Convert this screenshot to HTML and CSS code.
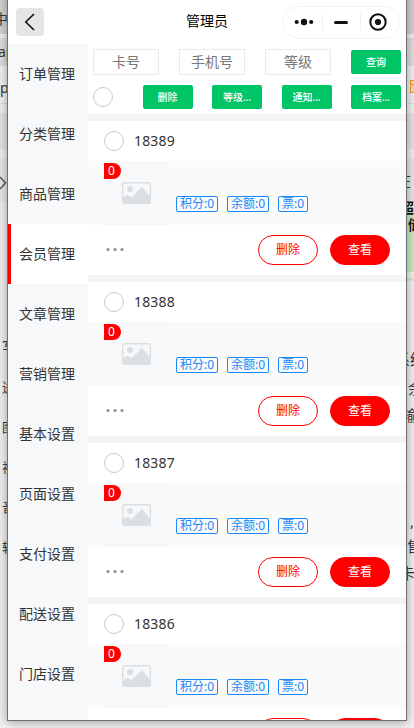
FILE: index.html
```html
<!DOCTYPE html>
<html lang="zh-CN">
<head>
<meta charset="utf-8">
<title>管理员</title>
<link rel="stylesheet" href="styles.css">
</head>
<body>
<div class="desktop" id="desktop"></div>
<div class="window">
  <header class="nav">
    <button class="back" aria-label="返回"><svg width="28" height="28" viewBox="0 0 28 28"><path d="M18 6 9.800 14 18 22" fill="none" stroke="#111" stroke-width="1.600"/></svg></button>
    <h1>管理员</h1>
    <div class="capsule">
      <svg width="118" height="33" viewBox="0 0 118 33"><rect x=".5" y=".5" width="117" height="32" rx="16" fill="#fff" stroke="#f3f3f3"/><path d="M40.500 7v18M78.500 7v18" stroke="#f1f1f1"/><circle cx="14.700" cy="16" r="2.100"/><circle cx="22" cy="16" r="3.200"/><circle cx="29.200" cy="16" r="2.100"/><path d="M53.500 16.500h11" stroke="#111" stroke-width="3" stroke-linecap="round"/><circle cx="96" cy="16" r="7.700" fill="none" stroke="#111" stroke-width="2"/><circle cx="96" cy="16" r="3.100"/></svg>
    </div>
  </header>
  <div class="main">
    <nav class="side">
      <a>订单管理</a><a>分类管理</a><a>商品管理</a><a class="active">会员管理</a><a>文章管理</a><a>营销管理</a><a>基本设置</a><a>页面设置</a><a>支付设置</a><a>配送设置</a><a>门店设置</a>
    </nav>
    <section class="content">
      <div class="tools">
        <div class="row"><span class="field">卡号</span><span class="field">手机号</span><span class="field">等级</span><button class="green">查询</button></div>
        <div class="row actions"><i class="radio"></i><button class="green">删除</button><button class="green">等级...</button><button class="green">通知...</button><button class="green">档案...</button></div>
      </div>
      <div id="cards"></div>
    </section>
  </div>
</div>
<template id="card">
  <article class="card">
    <div class="head"><i class="radio"></i><span class="number"></span></div>
    <div class="body">
      <div class="thumb"><span class="badge">0</span><svg width="29" height="22" viewBox="0 0 29 22"><rect x=".7" y=".7" width="27.600" height="20.600" rx="1.500" fill="#f7f8fa" stroke="#dcdfe2" stroke-width="1.400"/><circle cx="8" cy="7" r="3" fill="#dcdfe2"/><path d="M1 15.500q4.500-5 8.500 0L20 4.800l8 9.700V21H1z" fill="#dcdfe2"/></svg></div>
      <div class="tags"><span>积分:0</span><span>余额:0</span><span>票:0</span></div>
    </div>
    <div class="foot"><svg class="more" width="20" height="6" viewBox="0 0 20 6"><circle cx="4" cy="2.500" r="1.600"/><circle cx="11" cy="2.500" r="1.600"/><circle cx="18" cy="2.500" r="1.600"/></svg><button class="pill">删除</button><button class="pill solid">查看</button></div>
  </article>
</template>
<script src="app.js"></script>
</body>
</html>
```
FILE: styles.css
```css
* { box-sizing: border-box; }
body { margin: 0; width: 414px; height: 728px; overflow: hidden; font-family: "Noto Sans", "Noto Sans CJK SC", sans-serif; color: #333; }
button { margin: 0; padding: 0; border: 0; font-family: inherit; }
.desktop { position: absolute; inset: 0; overflow: hidden; background: linear-gradient(#d2d2d2 0 34px, #f0f0f0 34px 38px, #dedede 38px 66px, #f1f1f1 66px 103px, #dcdcdc 103px 104px, #f1f1f1 104px 113px, #e4e4e4 113px 149px, #f1f1f1 149px 158px, #e8e8e8 158px 202px, #f1f1f1 202px); }
.desktop span { position: absolute; white-space: nowrap; line-height: 20px; color: #333; }
.desktop .bold { font-weight: 700; color: #111; }
.desktop svg { position: absolute; left: 0; top: 0; }
.window { position: relative; margin-left: 7px; width: 400px; height: 721px; overflow: hidden; border: solid #707070; border-width: 0 1px 1px; background: #fff; }
.shade { position: absolute; left: 7px; top: -10px; width: 400px; height: 731px; box-shadow: 0 1px 10px rgba(0, 0, 0, .36); }
.nav { position: relative; height: 44px; display: flex; align-items: center; justify-content: center; }
.back { position: absolute; left: 8px; top: 8px; width: 28px; height: 28px; border-radius: 4px; background: #e5e5e5; }
.back svg { display: block; }
h1 { margin: 0 0 2px; font-size: 14px; line-height: 20px; font-weight: 400; color: #000; }
.capsule { position: absolute; left: 274px; top: 6px; height: 33px; }
.capsule svg { display: block; fill: #111; }
.main { display: flex; height: 676px; }
.side { width: 80px; flex: none; background: #f7f8fa; }
.side a { display: flex; align-items: center; height: 60px; padding-left: 11px; font-size: 14px; line-height: 20px; }
.side .active { background: #fff; border-left: 3px solid #f00; padding-left: 8px; }
.content { width: 318px; background: #f4f4f4; }
.tools { height: 70px; padding: 5px; background: #fff; }
.row { display: flex; align-items: center; justify-content: space-between; height: 26px; }
.actions { margin-top: 10px; height: 24px; }
.actions .radio { margin-right: 10px; }
.field { width: 66px; height: 26px; border: 1px solid #eaeaea; text-align: center; font-size: 14px; line-height: 24px; color: #777; }
.green { width: 50px; height: 24px; border-radius: 2px; background: #00c567; color: #fff; font-size: 10px; line-height: 24px; font-weight: 500; }
.radio { width: 20px; height: 20px; flex: none; border: 1px solid #c8c9cc; border-radius: 50%; }
.card { margin-top: 7px; height: 154px; background: #fff; }
.head { height: 40px; padding-left: 16px; display: flex; align-items: center; }
.number { margin-left: 10px; font-size: 14px; line-height: 20px; letter-spacing: .15px; }
.body { height: 64px; padding-left: 16px; display: flex; background: #fafafa; }
.thumb { position: relative; width: 64px; height: 64px; display: flex; align-items: center; justify-content: center; background: #f7f8fa; }
.badge { position: absolute; left: 0; top: 2px; width: 17px; height: 16px; border-radius: 0 8px 8px 0; background: #f00; color: #fff; text-align: center; font-size: 12px; line-height: 16px; padding-right: 2px; }
.tags { display: flex; gap: 9px; margin: 35px 0 0 8px; }
.tags span { width: 42px; height: 16px; border: 1px solid #1989fa; border-radius: 2px; text-align: center; color: #1989fa; font-size: 12px; line-height: 13px; white-space: nowrap; }
.tags span:last-child { width: 30px; }
.foot { height: 50px; padding: 0 16px; display: flex; align-items: center; gap: 12px; }
.more { margin-right: auto; fill: #8e9095; }
.pill { width: 60px; height: 30px; border: 1px solid #f00; border-radius: 15px; background: #fff; color: #f00; font-size: 12px; line-height: 28px; }
.solid { background: #f00; color: #fff; }
```
FILE: app.js
```js
const template = document.getElementById("card");
const list = document.getElementById("cards");
["18389", "18388", "18387", "18386"].forEach((number) => {
  const card = template.content.cloneNode(true);
  card.querySelector(".number").textContent = number;
  list.append(card);
});

// Text of the page behind the window: text, left, top, font size, class.
const desktop = document.getElementById("desktop");
desktop.innerHTML = `<svg width="414" height="728"><path d="M0 177l5.500 6-5.500 6" fill="none" stroke="#555" stroke-width="1.500"/><path d="M406 207h8v65h-8z" fill="#c6ecc0"/><path d="M406 279.500h8" stroke="#c6ecc0" stroke-width="2"/><rect x="410.500" y="80.500" width="10" height="12" fill="#f6dfb2" stroke="#eba02a"/><path d="M410 84.500h4" stroke="#eba02a"/></svg><div class="shade"></div>`;
[
  ["中", -6, 9, 14], ["ap", -2, 42, 14], ["p", 0, 78, 14],
  ["写", 2, 336, 13], ["送", 2, 377, 13], ["图", 2, 417, 13],
  ["视", 2, 457, 13], ["音", 2, 497, 13], ["转", 2, 537, 13],
  ["在", 397, 171, 14], ["超", 400, 198, 14, "bold"], ["储", 408, 215, 14, "bold"],
  ["系统", 395, 349, 15], ["余", 408, 378, 15], ["输", 402, 405, 15],
  [",", 410, 511, 15], ["售", 407, 536, 15], ["卡", 400, 563, 15],
].forEach(([text, left, top, size, weight]) => {
  const span = document.createElement("span");
  span.textContent = text;
  span.className = weight || "";
  span.style.cssText = `left:${left}px;top:${top}px;font-size:${size}px`;
  desktop.append(span);
});
```
